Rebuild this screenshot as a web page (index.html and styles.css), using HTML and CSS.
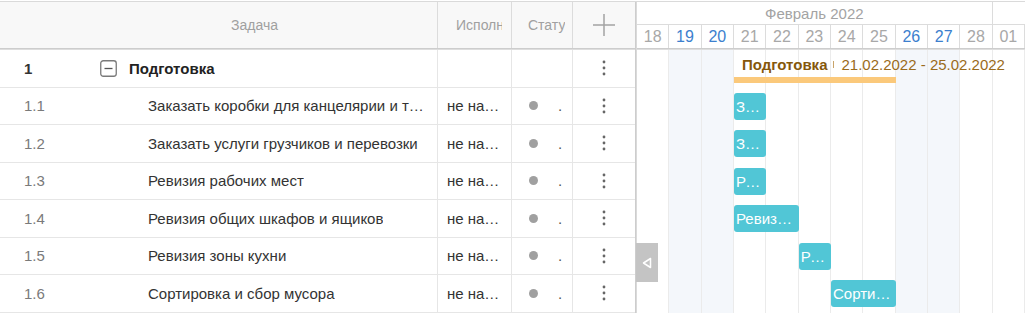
FILE: index.html
```html
<!DOCTYPE html>
<html lang="ru">
<head>
    <meta charset="UTF-8">
    <meta name="viewport" content="width=device-width, initial-scale=1.0">
    <title>Диаграмма Ганта</title>
    <link rel="stylesheet" href="styles.css">
</head>
<body>
    <div class="gantt">
        <div class="grid">
            <div class="grid-head">
                <div class="cell c-num"></div>
                <div class="cell c-task head-center">Задача</div>
                <div class="cell c-owner"><span class="clip">Исполнитель</span></div>
                <div class="cell c-status"><span class="clip">Статус</span></div>
                <div class="cell c-act">
                    <svg width="24" height="24" viewBox="0 0 24 24"><path d="M12 1v22M1 12h22" stroke="#a3a3a3" stroke-width="1.5" fill="none"/></svg>
                </div>
            </div>
            <div class="grid-body">
                <div class="row parent">
                    <div class="cell c-num">1</div>
                    <div class="cell c-task">
                        <svg class="toggle-box" width="17" height="17" viewBox="0 0 17 17"><rect x="0.75" y="0.75" width="15.5" height="15.5" rx="2.5" fill="#fff" stroke="#7a7a7a" stroke-width="1.3"/><path d="M4.5 8.5h8" stroke="#555" stroke-width="1.3"/></svg>
                        <span class="text">Подготовка</span>
                    </div>
                    <div class="cell c-owner"></div>
                    <div class="cell c-status"></div>
                    <div class="cell c-act"><svg class="kebab" width="4" height="16" viewBox="0 0 4 16"><circle cx="2" cy="2" r="1.4"/><circle cx="2" cy="8" r="1.4"/><circle cx="2" cy="14" r="1.4"/></svg></div>
                </div>
                <div class="row">
                    <div class="cell c-num">1.1</div>
                    <div class="cell c-task"><span class="text">Заказать коробки для канцелярии и техники</span></div>
                    <div class="cell c-owner"><span class="text">не назначен</span></div>
                    <div class="cell c-status"><span class="dot"></span><span class="st">.</span></div>
                    <div class="cell c-act"><svg class="kebab" width="4" height="16" viewBox="0 0 4 16"><circle cx="2" cy="2" r="1.4"/><circle cx="2" cy="8" r="1.4"/><circle cx="2" cy="14" r="1.4"/></svg></div>
                </div>
                <div class="row">
                    <div class="cell c-num">1.2</div>
                    <div class="cell c-task"><span class="text">Заказать услуги грузчиков и перевозки</span></div>
                    <div class="cell c-owner"><span class="text">не назначен</span></div>
                    <div class="cell c-status"><span class="dot"></span><span class="st">.</span></div>
                    <div class="cell c-act"><svg class="kebab" width="4" height="16" viewBox="0 0 4 16"><circle cx="2" cy="2" r="1.4"/><circle cx="2" cy="8" r="1.4"/><circle cx="2" cy="14" r="1.4"/></svg></div>
                </div>
                <div class="row">
                    <div class="cell c-num">1.3</div>
                    <div class="cell c-task"><span class="text">Ревизия рабочих мест</span></div>
                    <div class="cell c-owner"><span class="text">не назначен</span></div>
                    <div class="cell c-status"><span class="dot"></span><span class="st">.</span></div>
                    <div class="cell c-act"><svg class="kebab" width="4" height="16" viewBox="0 0 4 16"><circle cx="2" cy="2" r="1.4"/><circle cx="2" cy="8" r="1.4"/><circle cx="2" cy="14" r="1.4"/></svg></div>
                </div>
                <div class="row">
                    <div class="cell c-num">1.4</div>
                    <div class="cell c-task"><span class="text">Ревизия общих шкафов и ящиков</span></div>
                    <div class="cell c-owner"><span class="text">не назначен</span></div>
                    <div class="cell c-status"><span class="dot"></span><span class="st">.</span></div>
                    <div class="cell c-act"><svg class="kebab" width="4" height="16" viewBox="0 0 4 16"><circle cx="2" cy="2" r="1.4"/><circle cx="2" cy="8" r="1.4"/><circle cx="2" cy="14" r="1.4"/></svg></div>
                </div>
                <div class="row">
                    <div class="cell c-num">1.5</div>
                    <div class="cell c-task"><span class="text">Ревизия зоны кухни</span></div>
                    <div class="cell c-owner"><span class="text">не назначен</span></div>
                    <div class="cell c-status"><span class="dot"></span><span class="st">.</span></div>
                    <div class="cell c-act"><svg class="kebab" width="4" height="16" viewBox="0 0 4 16"><circle cx="2" cy="2" r="1.4"/><circle cx="2" cy="8" r="1.4"/><circle cx="2" cy="14" r="1.4"/></svg></div>
                </div>
                <div class="row">
                    <div class="cell c-num">1.6</div>
                    <div class="cell c-task"><span class="text">Сортировка и сбор мусора</span></div>
                    <div class="cell c-owner"><span class="text">не назначен</span></div>
                    <div class="cell c-status"><span class="dot"></span><span class="st">.</span></div>
                    <div class="cell c-act"><svg class="kebab" width="4" height="16" viewBox="0 0 4 16"><circle cx="2" cy="2" r="1.4"/><circle cx="2" cy="8" r="1.4"/><circle cx="2" cy="14" r="1.4"/></svg></div>
                </div>
            </div>
        </div>

        <div class="chart">
            <div class="scale">
                <div class="months">
                    <div class="month feb">Февраль 2022</div>
                    <div class="month"></div>
                </div>
                <div class="days">
                    <div class="day">18</div>
                    <div class="day we">19</div>
                    <div class="day we">20</div>
                    <div class="day">21</div>
                    <div class="day">22</div>
                    <div class="day">23</div>
                    <div class="day">24</div>
                    <div class="day">25</div>
                    <div class="day we">26</div>
                    <div class="day we">27</div>
                    <div class="day">28</div>
                    <div class="day">01</div>
                </div>
            </div>
            <div class="timeline">
                <div class="col c1"></div>
                <div class="col c2 we"></div>
                <div class="col c3 we"></div>
                <div class="col c4"></div>
                <div class="col c5"></div>
                <div class="col c6"></div>
                <div class="col c7"></div>
                <div class="col c8"></div>
                <div class="col c9 we"></div>
                <div class="col c10 we"></div>
                <div class="col c11"></div>
                <div class="col c12"></div>

                <div class="project-label"><b>Подготовка</b><span class="sep"></span>21.02.2022 - 25.02.2022</div>
                <div class="project-bar"></div>

                <div class="bar r2 d21">Заказать коробки</div>
                <div class="bar r3 d21">Заказать услуги</div>
                <div class="bar r4 d21">Ревизия рабочих мест</div>
                <div class="bar r5 d21-22">Ревизия общих шкафов</div>
                <div class="bar r6 d23">Ревизия зоны кухни</div>
                <div class="bar r7 d24-25">Сортировка и сбор мусора</div>
            </div>
        </div>

        <div class="collapse">
            <svg width="10" height="12" viewBox="0 0 10 12"><path d="M8.5 1.5v9L1.5 6z" fill="none" stroke="#fff" stroke-width="1.5" stroke-linejoin="round"/></svg>
        </div>
    </div>
</body>
</html>
```

FILE: styles.css
```css
* {
    font-family: "Liberation Sans", Arial, sans-serif;
    box-sizing: border-box;
    margin: 0;
    padding: 0;
}

body {
    background-color: #fff;
    padding-top: 1px;
    overflow: hidden;
}

.gantt {
    display: flex;
    position: relative;
    border-top: 1px solid #dadada;
}

/* левая таблица */
.grid {
    width: 636px;
    flex-shrink: 0;
    border-right: 1px solid #cdcdcd;
}

.grid-head {
    display: flex;
    height: 47px;
    background-color: #f8f8f8;
    border-bottom: 1px solid #cdcdcd;
}

.grid-head .cell {
    color: #a0a0a0;
    font-size: 14px;
    border-right-color: #dcdcdc;
}

.clip {
    overflow: hidden;
    white-space: nowrap;
}

.grid-body {
    border-top: 1px solid #dedede;
}

.row {
    display: flex;
    height: 37.5px;
    border-bottom: 1px solid #e6e6e6;
}

.cell {
    display: flex;
    align-items: center;
    overflow: hidden;
    white-space: nowrap;
    font-size: 15px;
    color: #333;
    border-right: 1px solid #e6e6e6;
}

.text {
    overflow: hidden;
    text-overflow: ellipsis;
    white-space: nowrap;
}

.c-num {
    width: 72px;
    padding-left: 24px;
    color: #7a7a7a;
    border-right: 0;
}

.c-task {
    width: 366px;
    padding-left: 76px;
    padding-right: 7px;
}

.grid-head .head-center {
    justify-content: center;
    padding: 0;
}

.c-owner {
    width: 74px;
    padding-left: 9px;
    padding-right: 8px;
}

.grid-head .c-owner {
    padding-left: 18px;
    padding-right: 9px;
}

.c-status {
    width: 61px;
    padding-left: 17px;
}

.grid-head .c-status {
    padding-left: 16px;
    padding-right: 7px;
}

.c-act {
    width: 62px;
    justify-content: center;
    border-right: 0;
}

.grid-head .c-act {
    border-right: 0;
}

.parent .c-num {
    font-weight: bold;
    color: #333;
}

.parent .c-task {
    padding-left: 28px;
    column-gap: 12px;
}

.parent .c-task .text {
    font-weight: bold;
    color: #222;
}

.toggle-box {
    flex-shrink: 0;
}

.kebab {
    fill: #666;
}

.dot {
    width: 9px;
    height: 9px;
    border-radius: 50%;
    background-color: #a0a0a0;
    flex-shrink: 0;
}

.st {
    margin-left: 20px;
    color: #555;
}

/* диаграмма */
.chart {
    flex: 1;
    border-left: 1px solid #dadada;
    overflow: hidden;
}

.months,
.days,
.timeline {
    display: grid;
    grid-template-columns: repeat(12, 1fr);
}

.months {
    height: 23px;
    border-bottom: 1px solid #dcdcdc;
}

.month {
    display: flex;
    align-items: center;
    justify-content: center;
    font-size: 15px;
    color: #a3a3a3;
}

.month.feb {
    grid-column: 1 / 12;
    border-right: 1px solid #dcdcdc;
}

.days {
    height: 24px;
    border-bottom: 1px solid #cdcdcd;
}

.day {
    display: flex;
    align-items: center;
    justify-content: center;
    font-size: 16px;
    color: #a8a8a8;
    border-right: 1px solid #dcdcdc;
}

.day.we {
    color: #3c7fce;
}

.timeline {
    grid-template-rows: repeat(7, 37.5px);
    border-top: 1px solid #dedede;
}

.col {
    grid-row: 1 / -1;
    border-right: 1px solid #ebebeb;
}

.c1 { grid-column: 1; }
.c2 { grid-column: 2; }
.c3 { grid-column: 3; }
.c4 { grid-column: 4; }
.c5 { grid-column: 5; }
.c6 { grid-column: 6; }
.c7 { grid-column: 7; }
.c8 { grid-column: 8; }
.c9 { grid-column: 9; }
.c10 { grid-column: 10; }
.c11 { grid-column: 11; }
.c12 { grid-column: 12; }

.col.we {
    background-color: #f4f7fb;
}

.project-label {
    grid-row: 1;
    grid-column: 4 / -1;
    align-self: start;
    margin-top: 6px;
    padding-left: 8px;
    font-size: 15px;
    white-space: nowrap;
    color: #9a6b1c;
    display: flex;
    align-items: center;
}

.project-label b {
    color: #85570b;
}

.sep {
    display: inline-block;
    width: 1px;
    height: 7px;
    margin: 0 7px 0 6px;
    background-color: #c9a46a;
}

.project-bar {
    grid-row: 1;
    grid-column: 4 / 9;
    align-self: end;
    height: 6.5px;
    margin-bottom: 4.5px;
    background-color: #fbc97b;
}

.bar {
    align-self: center;
    height: 27px;
    line-height: 27px;
    padding: 0 2px 0 2px;
    border-radius: 3px;
    background-color: #51c6d6;
    color: #fff;
    font-size: 15px;
    white-space: nowrap;
    overflow: hidden;
    text-overflow: ellipsis;
}

.r2 { grid-row: 2; }
.r3 { grid-row: 3; }
.r4 { grid-row: 4; }
.r5 { grid-row: 5; }
.r6 { grid-row: 6; }
.r7 { grid-row: 7; }

.d21 { grid-column: 4; }
.d21-22 { grid-column: 4 / 6; }
.d23 { grid-column: 6; }
.d24-25 { grid-column: 7 / 9; }

/* кнопка свёртывания таблицы */
.collapse {
    position: absolute;
    left: 636px;
    top: 241px;
    width: 22px;
    height: 39px;
    background-color: #c4c4c4;
    display: flex;
    align-items: center;
    justify-content: center;
}
```
